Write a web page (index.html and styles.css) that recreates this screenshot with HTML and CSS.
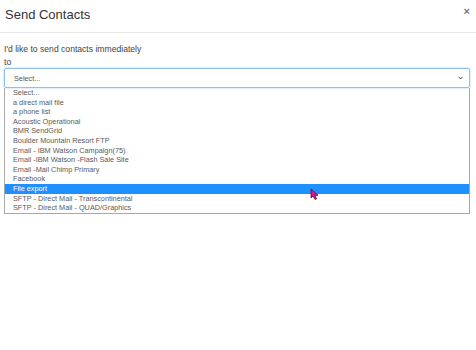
FILE: index.html
```html
<!DOCTYPE html>
<html lang="en">
<head>
  <meta charset="UTF-8">
  <title>Send Contacts</title>
  <link rel="stylesheet" href="styles.css">
</head>
<body>
  <div class="modal">
    <div class="modal-header">
      <h4 class="modal-title">Send Contacts</h4>
      <button class="close">&times;</button>
    </div>

    <div class="modal-body">
      <label class="send-label" for="dest">I'd like to send contacts immediately<br>to</label>

      <div class="select-wrap">
        <div class="select-box" id="dest">
          <span>Select...</span>
          <svg class="caret" width="5" height="4" viewBox="0 0 5 4">
            <path d="M0.5 0.8 L2.5 3 L4.5 0.8" fill="none" stroke="#555" stroke-width="1"/>
          </svg>
        </div>

        <ul class="options">
          <li>Select...</li>
          <li>a direct mail file</li>
          <li>a phone list</li>
          <li>Acoustic Operational</li>
          <li>BMR SendGrid</li>
          <li>Boulder Mountain Resort FTP</li>
          <li>Email - IBM Watson Campaign(75)</li>
          <li>Email -IBM Watson -Flash Sale Site</li>
          <li>Email -Mail Chimp Primary</li>
          <li>Facebook</li>
          <li class="active">File export
            <svg class="cursor" width="9" height="12" viewBox="0 0 9 12">
              <path d="M1 1 L1 10 L3.2 8 L5 11.5 L6.5 10.8 L4.8 7.4 L8 7.2 Z" fill="#e0158f" stroke="#5a0a3a" stroke-width="0.8"/>
            </svg>
          </li>
          <li>SFTP - Direct Mail - Transcontinental</li>
          <li>SFTP - Direct Mail - QUAD/Graphics</li>
        </ul>
      </div>
    </div>
  </div>
</body>
</html>
```

FILE: styles.css
```css
body {
  margin: 0;
  background: #fff;
  font-family: "Liberation Sans", Arial, sans-serif;
  color: #333;
}

.modal {
  width: 476px;
}

.modal-header {
  display: flex;
  justify-content: space-between;
  align-items: flex-start;
  height: 33px;
  box-sizing: border-box;
  padding: 6px 6px 0 5px;
  border-bottom: 1px solid #e8e8e8;
}

.modal-title {
  margin: 0;
  font-size: 13px;
  font-weight: normal;
  line-height: 18px;
  color: #333;
}

.close {
  background: none;
  border: none;
  padding: 0;
  margin-top: -2px;
  font-size: 11px;
  font-weight: bold;
  line-height: 14px;
  color: #777;
  cursor: pointer;
}

.modal-body {
  padding: 10px 6px 0 4px;
}

.send-label {
  display: block;
  font-size: 8.6px;
  line-height: 13px;
  color: #444;
  margin-bottom: -1px;
}

.select-wrap {
  position: relative;
}

.select-box {
  display: flex;
  align-items: center;
  justify-content: space-between;
  height: 20px;
  box-sizing: border-box;
  padding: 0 6px 0 9px;
  border: 1px solid #8fc1ef;
  border-radius: 2px;
  box-shadow: 0 0 2px rgba(102, 175, 233, 0.7);
  font-size: 7.3px;
  color: #555;
}

.options {
  list-style: none;
  margin: 0;
  padding: 0;
  border: 1px solid #a8a8a8;
  border-top: none;
  font-size: 7.3px;
  color: #5a5a5a;
}

.options li {
  position: relative;
  height: 9.6px;
  line-height: 9.6px;
  padding-left: 8px;
}

.options li.active {
  background: #1e90ff;
  color: #fff;
}

.cursor {
  position: absolute;
  left: 305px;
  top: 4px;
}
```
